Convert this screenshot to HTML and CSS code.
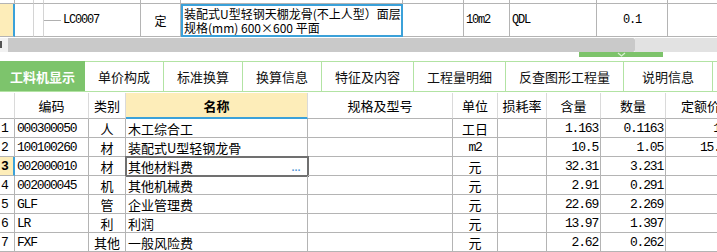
FILE: index.html
```html
<!DOCTYPE html>
<html lang="zh-CN">
<head>
  <meta charset="UTF-8" />
  <meta name="viewport" content="width=device-width, initial-scale=1.0" />
  <title>工料机显示</title>
  <link rel="stylesheet" href="styles.css">
</head>
<body>
  <div class="screen">

    <!-- 定额行 -->
    <div class="quota">
      <div></div><div class="soft"></div><div class="soft"></div><div></div><div></div><div></div><div></div><div></div><div></div><div></div><div></div>

      <div class="q-mark"></div>
      <div class="soft"></div>
      <div class="soft"></div>
      <div class="q-code mono"><span class="tree"></span>LC0007</div>
      <div class="c">定</div>
      <div class="q-edit">
        <span>装配式U型轻钢天棚龙骨(不上人型）面层</span>
        <span>规格(mm) 600×600 平面</span>
      </div>
      <div></div>
      <div class="mono">10m2</div>
      <div class="mono">QDL</div>
      <div class="c mono">0.1</div>
      <div></div>
    </div>

    <div class="hscroll">
      <div class="arrow"></div>
      <div class="thumb"></div>
      <div class="track"></div>
    </div>

    <div class="splitter">
      <div class="grip">
        <svg width="9" height="5" viewBox="0 0 9 5"><polyline points="1,1 4.5,4 8,1" fill="none" stroke="#d9f0d3" stroke-width="1.2"/></svg>
      </div>
    </div>

    <!-- 页签 -->
    <div class="tabs">
      <div class="tab active">工料机显示</div>
      <div class="tab">单价构成</div>
      <div class="tab">标准换算</div>
      <div class="tab">换算信息</div>
      <div class="tab">特征及内容</div>
      <div class="tab">工程量明细</div>
      <div class="tab">反查图形工程量</div>
      <div class="tab wide">说明信息</div>
      <div class="tab"></div>
    </div>

    <!-- 工料机表格 -->
    <div class="grid">
      <div class="hd"></div>
      <div class="hd">编码</div>
      <div class="hd">类别</div>
      <div class="hd sel">名称</div>
      <div class="hd">规格及型号</div>
      <div class="hd">单位</div>
      <div class="hd">损耗率</div>
      <div class="hd">含量</div>
      <div class="hd">数量</div>
      <div class="hd">定额价</div>

      <div class="no mono">1</div>
      <div class="mono">000300050</div>
      <div class="c">人</div>
      <div>木工综合工</div>
      <div></div>
      <div class="c">工日</div>
      <div></div>
      <div class="r mono">1.163</div>
      <div class="r mono">0.1163</div>
      <div class="r mono">126</div>

      <div class="no mono">2</div>
      <div class="mono">100100260</div>
      <div class="c">材</div>
      <div>装配式U型轻钢龙骨</div>
      <div></div>
      <div class="c mono">m2</div>
      <div></div>
      <div class="r mono">10.5</div>
      <div class="r mono">1.05</div>
      <div class="r mono">15.18</div>

      <div class="no mono current">3</div>
      <div class="mono">002000010</div>
      <div class="c">材</div>
      <div class="focus">其他材料费<span class="more">...</span></div>
      <div></div>
      <div class="c">元</div>
      <div></div>
      <div class="r mono">32.31</div>
      <div class="r mono">3.231</div>
      <div></div>

      <div class="no mono">4</div>
      <div class="mono">002000045</div>
      <div class="c">机</div>
      <div>其他机械费</div>
      <div></div>
      <div class="c">元</div>
      <div></div>
      <div class="r mono">2.91</div>
      <div class="r mono">0.291</div>
      <div></div>

      <div class="no mono">5</div>
      <div class="mono">GLF</div>
      <div class="c">管</div>
      <div>企业管理费</div>
      <div></div>
      <div class="c">元</div>
      <div></div>
      <div class="r mono">22.69</div>
      <div class="r mono">2.269</div>
      <div></div>

      <div class="no mono">6</div>
      <div class="mono">LR</div>
      <div class="c">利</div>
      <div>利润</div>
      <div></div>
      <div class="c">元</div>
      <div></div>
      <div class="r mono">13.97</div>
      <div class="r mono">1.397</div>
      <div></div>

      <div class="no mono">7</div>
      <div class="mono">FXF</div>
      <div class="c">其他</div>
      <div>一般风险费</div>
      <div></div>
      <div class="c">元</div>
      <div></div>
      <div class="r mono">2.62</div>
      <div class="r mono">0.262</div>
      <div></div>
    </div>

  </div>
</body>
</html>
```

FILE: styles.css
```css
body { margin: 0; background: #fff; color: #000; font-family: "Noto Sans CJK SC", sans-serif; }
.screen { width: 717px; height: 252px; overflow: hidden; }
.mono { font-family: "Liberation Mono", monospace; font-size: 12px; letter-spacing: -1.2px; }

/* 定额行 */
.quota { display: grid; grid-template-columns: 15px 19px 10px 97px 40px 222px 61px 46px 87px 71px 60px; grid-template-rows: 4px 33px; width: 728px; }
.quota > div { box-sizing: border-box; border-right: 1px solid #b4b4b4; border-bottom: 1px solid #b4b4b4; display: flex; align-items: center; padding-left: 2px; font-size: 12px; white-space: nowrap; overflow: hidden; }
.quota > .soft { border-right-color: #d4d4d4; }
.quota > .q-mark { background: #fdedb9; border-right: 2px solid #3ba1d9; }
.quota > .q-code { padding-left: 0; }
.tree { display: inline-block; width: 17px; height: 1px; background: #b0b0b0; margin-right: 2px; }
.quota > .q-edit { flex-direction: column; align-items: flex-start; justify-content: center; border: 2px solid #3ba1d9; padding: 0 1px; }
.q-edit span { display: block; height: 14px; line-height: 14px; }
.quota > .c, .grid > .c { justify-content: center; padding-left: 0; }

/* 横向滚动条 */
.hscroll { display: flex; height: 14px; margin-top: 1px; }
.hscroll .arrow { width: 8px; background: #f2f2f2; position: relative; }
.hscroll .arrow::before { content: ""; position: absolute; left: 0; top: 3px; width: 2px; height: 7px; background: #555; }
.hscroll .thumb { width: 627px; background: #c9c9c9; border-radius: 0 2px 2px 0; }
.hscroll .track { flex: 1; background: #e2e2e2; }

.splitter { height: 9px; padding-left: 579px; }
.grip { width: 84px; height: 5px; background: #7dc36b; display: flex; justify-content: center; }
.grip svg { display: block; }

/* 页签 */
.tabs { display: flex; height: 31px; box-sizing: border-box; border-top: 1px solid #b2e3a3; border-bottom: 1px solid #b2e3a3; }
.tab { display: flex; align-items: center; padding: 0 13px; border-right: 1px solid #b2e3a3; font-size: 13px; white-space: nowrap; color: #111; }
.tab.active { background: #7dc46c; color: #fff; font-weight: bold; padding: 0 10px; margin-top: -1px; border-right: none; }
.tab.wide { padding: 0 18px; }

/* 表格 */
.grid { display: grid; grid-template-columns: 15px 74px 37px 182px 145px 45px 49px 54px 65px 70px; grid-template-rows: 26px repeat(7, 19px); width: 736px; margin-top: 1px; }
.grid > div { box-sizing: border-box; border-right: 1px solid #b4b4b4; border-bottom: 1px solid #b4b4b4; display: flex; align-items: center; padding-left: 2px; font-size: 13px; white-space: nowrap; overflow: hidden; }
.grid > .hd { justify-content: center; padding-left: 0; border-right-color: #dadada; }
.grid > .hd.sel { background: #fdedb9; font-weight: bold; border-bottom: 2px solid #3ba1d9; }
.grid > .r { justify-content: flex-end; padding: 0 2px 0 0; }
.grid > .no { padding-left: 1px; }
.grid > .no.current { background: #fdedb9; font-weight: bold; border-right: 2px solid #3ba1d9; }
.grid > .focus { outline: 2px solid #707070; outline-offset: -1px; }
.more { margin-left: auto; margin-right: 8px; color: #4a8fd4; font-family: "Liberation Mono", monospace; font-size: 10px; font-weight: bold; letter-spacing: -3px; align-self: flex-end; line-height: 12px; }
```
